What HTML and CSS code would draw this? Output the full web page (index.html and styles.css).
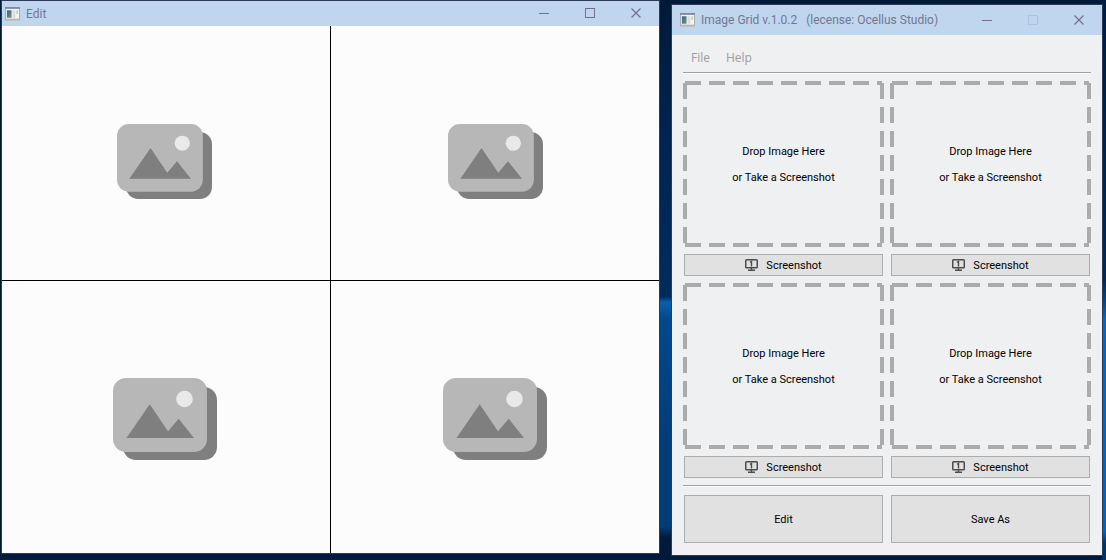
FILE: index.html
```html
<!DOCTYPE html>
<html lang="en">
<head>
<meta charset="utf-8">
<title>Image Grid</title>
<link rel="stylesheet" href="styles.css">
</head>
<body>
<svg class="defs" aria-hidden="true">
  <defs>
    <linearGradient id="screen" x1="0" y1="0" x2="1" y2="1">
      <stop offset="0" stop-color="#3a5f9c"/>
      <stop offset="1" stop-color="#6f9b6a"/>
    </linearGradient>
  </defs>
  <symbol id="app" viewBox="0 0 16 14">
    <rect x="0.5" y="0.5" width="15" height="12" fill="#f4f4f2" stroke="#a9a9ad"/>
    <path d="M0 0.5h16" stroke="#8088a0" stroke-width="2"/>
    <path d="M0 13.5h16" stroke="#b5b5b5"/>
    <rect x="2" y="3" width="5" height="8" fill="url(#screen)"/>
    <rect x="8" y="3" width="3" height="8" fill="#dcdcdc"/>
    <rect x="12" y="3" width="2" height="4" fill="#c5d6bd"/>
  </symbol>
  <symbol id="pictures" viewBox="0 0 104 82">
    <rect x="10" y="9" width="94" height="73" rx="13" fill="#7f7f7f"/>
    <rect width="94" height="74" rx="13" fill="#b7b7b7"/>
    <circle cx="71.5" cy="21" r="8.3" fill="#e9e9e9"/>
    <path d="M13.5 60 36.7 26.3 55 53.3 65.7 40.7 81 60z" fill="#7f7f7f"/>
  </symbol>
  <symbol id="monitor" viewBox="0 0 13 12">
    <rect x="0.75" y="0.75" width="11.5" height="8" rx="0.8" fill="none" stroke="#4c4c4c" stroke-width="1.5"/>
    <path d="M5 3.4 6.5 2.5V7.5M6.5 9v2M3 11.2h7" fill="none" stroke="#4c4c4c" stroke-width="1.4"/>
  </symbol>
  <symbol id="min" viewBox="0 0 11 11"><path d="M0 5.5h10" stroke="currentColor"/></symbol>
  <symbol id="max" viewBox="0 0 11 11"><rect x="0.5" y="0.5" width="9" height="9" fill="none" stroke="currentColor"/></symbol>
  <symbol id="close" viewBox="0 0 11 11"><path d="M0.5 0.5l9 9M9.5 0.5l-9 9" stroke="currentColor" stroke-width="1.2"/></symbol>
</svg>

<main class="desktop">
  <section class="window editor" aria-label="Edit">
    <header class="titlebar">
      <svg class="app-icon"><use href="#app"/></svg>
      <h1 class="title">Edit</h1>
      <button class="control" aria-label="Minimize"><svg><use href="#min"/></svg></button>
      <button class="control" aria-label="Maximize"><svg><use href="#max"/></svg></button>
      <button class="control" aria-label="Close"><svg><use href="#close"/></svg></button>
    </header>
    <div class="canvas">
      <div class="cell upper"><svg class="placeholder small"><use href="#pictures"/></svg></div>
      <div class="cell upper"><svg class="placeholder small"><use href="#pictures"/></svg></div>
      <div class="cell"><svg class="placeholder"><use href="#pictures"/></svg></div>
      <div class="cell"><svg class="placeholder"><use href="#pictures"/></svg></div>
    </div>
  </section>

  <section class="window tool" aria-label="Image Grid">
    <header class="titlebar tall">
      <svg class="app-icon"><use href="#app"/></svg>
      <h1 class="title">Image Grid v.1.0.2 &nbsp; (lecense: Ocellus Studio)</h1>
      <button class="control" aria-label="Minimize"><svg><use href="#min"/></svg></button>
      <button class="control" aria-label="Maximize" disabled><svg><use href="#max"/></svg></button>
      <button class="control" aria-label="Close"><svg><use href="#close"/></svg></button>
    </header>
    <div class="panel">
      <nav class="menu">
        <button class="menu-item">File</button>
        <button class="menu-item">Help</button>
      </nav>
      <hr class="rule">
      <div class="slots">
        <div class="slot">
          <div class="drop"><p>Drop Image Here</p><p>or Take a Screenshot</p></div>
          <button class="push"><svg class="monitor"><use href="#monitor"/></svg>Screenshot</button>
        </div>
        <div class="slot">
          <div class="drop"><p>Drop Image Here</p><p>or Take a Screenshot</p></div>
          <button class="push"><svg class="monitor"><use href="#monitor"/></svg>Screenshot</button>
        </div>
        <div class="slot">
          <div class="drop"><p>Drop Image Here</p><p>or Take a Screenshot</p></div>
          <button class="push"><svg class="monitor"><use href="#monitor"/></svg>Screenshot</button>
        </div>
        <div class="slot">
          <div class="drop"><p>Drop Image Here</p><p>or Take a Screenshot</p></div>
          <button class="push"><svg class="monitor"><use href="#monitor"/></svg>Screenshot</button>
        </div>
      </div>
      <hr class="rule">
      <div class="actions">
        <button class="push large">Edit</button>
        <button class="push large">Save As</button>
      </div>
    </div>
  </section>
</main>
</body>
</html>
```

FILE: styles.css
```css
* { box-sizing: border-box; }

body {
  margin: 0;
  font-family: Roboto, "Open Sans", sans-serif;
  font-size: 11px;
  color: #000;
}

.defs { position: absolute; width: 0; height: 0; }

.desktop {
  display: grid;
  grid-template-columns: 659fr 432fr;
  gap: 11px;
  min-height: 100vh;
  padding: 0 3px 4px 1px;
  background:
    linear-gradient(#001c40, #00285a 50%, #003f80 53%, #0068c8 57%, #0064c0 95%, #003468 97%) right / 4px 100% no-repeat,
    linear-gradient(#001a38, #001a38) left / 1px 100% no-repeat,
    linear-gradient(#001a38, #002450 25%, #002c5c 53%, #0b60ac 54%, #00488c 57%, #003c78 80%, #003c78 94%, #001a3c 96%, #001a3c);
}

.window {
  display: flex;
  flex-direction: column;
  border: 1px solid #2b3a58;
}

.editor { margin-bottom: 2px; }
.tool { margin-top: 4px; background: #eff0f1; }

.titlebar {
  display: flex;
  align-items: center;
  height: 25px;
  padding-left: 3px;
  background: #bfd6ee;
  color: #73778f;
}

.titlebar.tall { height: 30px; padding-left: 8px; }

.app-icon { width: 15px; height: 14px; margin-right: 6px; }

.title {
  flex: 1;
  margin: 0;
  font-size: 12px;
  font-weight: 400;
  white-space: nowrap;
}

.control {
  display: flex;
  align-items: center;
  justify-content: center;
  width: 46px;
  height: 100%;
  padding: 0;
  border: 0;
  background: none;
  color: #73708f;
}

.control svg { width: 11px; height: 11px; }
.control:disabled { color: #adc3e0; }

.canvas {
  display: grid;
  flex: 1;
  grid-template-columns: 1fr 1fr;
  grid-template-rows: 254fr 272fr;
  gap: 1px;
  background: #000;
}

.cell {
  display: flex;
  align-items: center;
  justify-content: center;
  padding-top: 4px;
  background: #fcfcfc;
}

.cell:nth-child(odd) { padding-right: 3px; }

.cell.upper { padding-top: 16px; }

.placeholder { width: 104px; height: 82px; }
.placeholder.small { width: 95px; height: 75px; }

.panel {
  display: flex;
  flex: 1;
  flex-direction: column;
  padding: 0 11px 12px;
}

.menu { display: flex; height: 37px; padding-top: 7px; }

.menu-item {
  padding: 0 8px;
  border: 0;
  background: none;
  color: #9d9d9d;
  font-family: "Open Sans", "Noto Sans", sans-serif;
  font-size: 12px;
}

.rule {
  width: 100%;
  height: 2px;
  margin: 0;
  border: 0;
  border-top: 1px solid #a0a0a0;
  background: #fff;
}

.slots {
  display: grid;
  flex: 1;
  grid-template-columns: 1fr 1fr;
  gap: 7px 6px;
  padding: 7px 0;
}

.slot { display: flex; flex-direction: column; gap: 7px; }

.drop {
  --h: repeating-linear-gradient(to right, #ababab 0 16px, transparent 16px 24px);
  --v: repeating-linear-gradient(to bottom, #ababab 0 16px, transparent 16px 24px);
  display: flex;
  flex: 1;
  flex-direction: column;
  justify-content: center;
  min-height: 100px;
  padding-top: 2px;
  background:
    var(--h) center top / calc(100% - 4px) 4px no-repeat,
    var(--h) center bottom / calc(100% - 4px) 4px no-repeat,
    var(--v) left center / 4px calc(100% - 4px) no-repeat,
    var(--v) right center / 4px calc(100% - 4px) no-repeat;
  line-height: 26px;
  text-align: center;
}

.drop p { margin: 0; }

.push {
  display: flex;
  align-items: center;
  justify-content: center;
  gap: 8px;
  height: 22px;
  margin: 0 1px;
  padding: 0;
  border: 1px solid #adadad;
  background: #e1e1e2;
  color: #000;
  font: inherit;
}

.push.large { height: 48px; }

.monitor { width: 13px; height: 12px; }

.actions {
  display: grid;
  grid-template-columns: 1fr 1fr;
  gap: 6px;
  padding-top: 8px;
}
```
